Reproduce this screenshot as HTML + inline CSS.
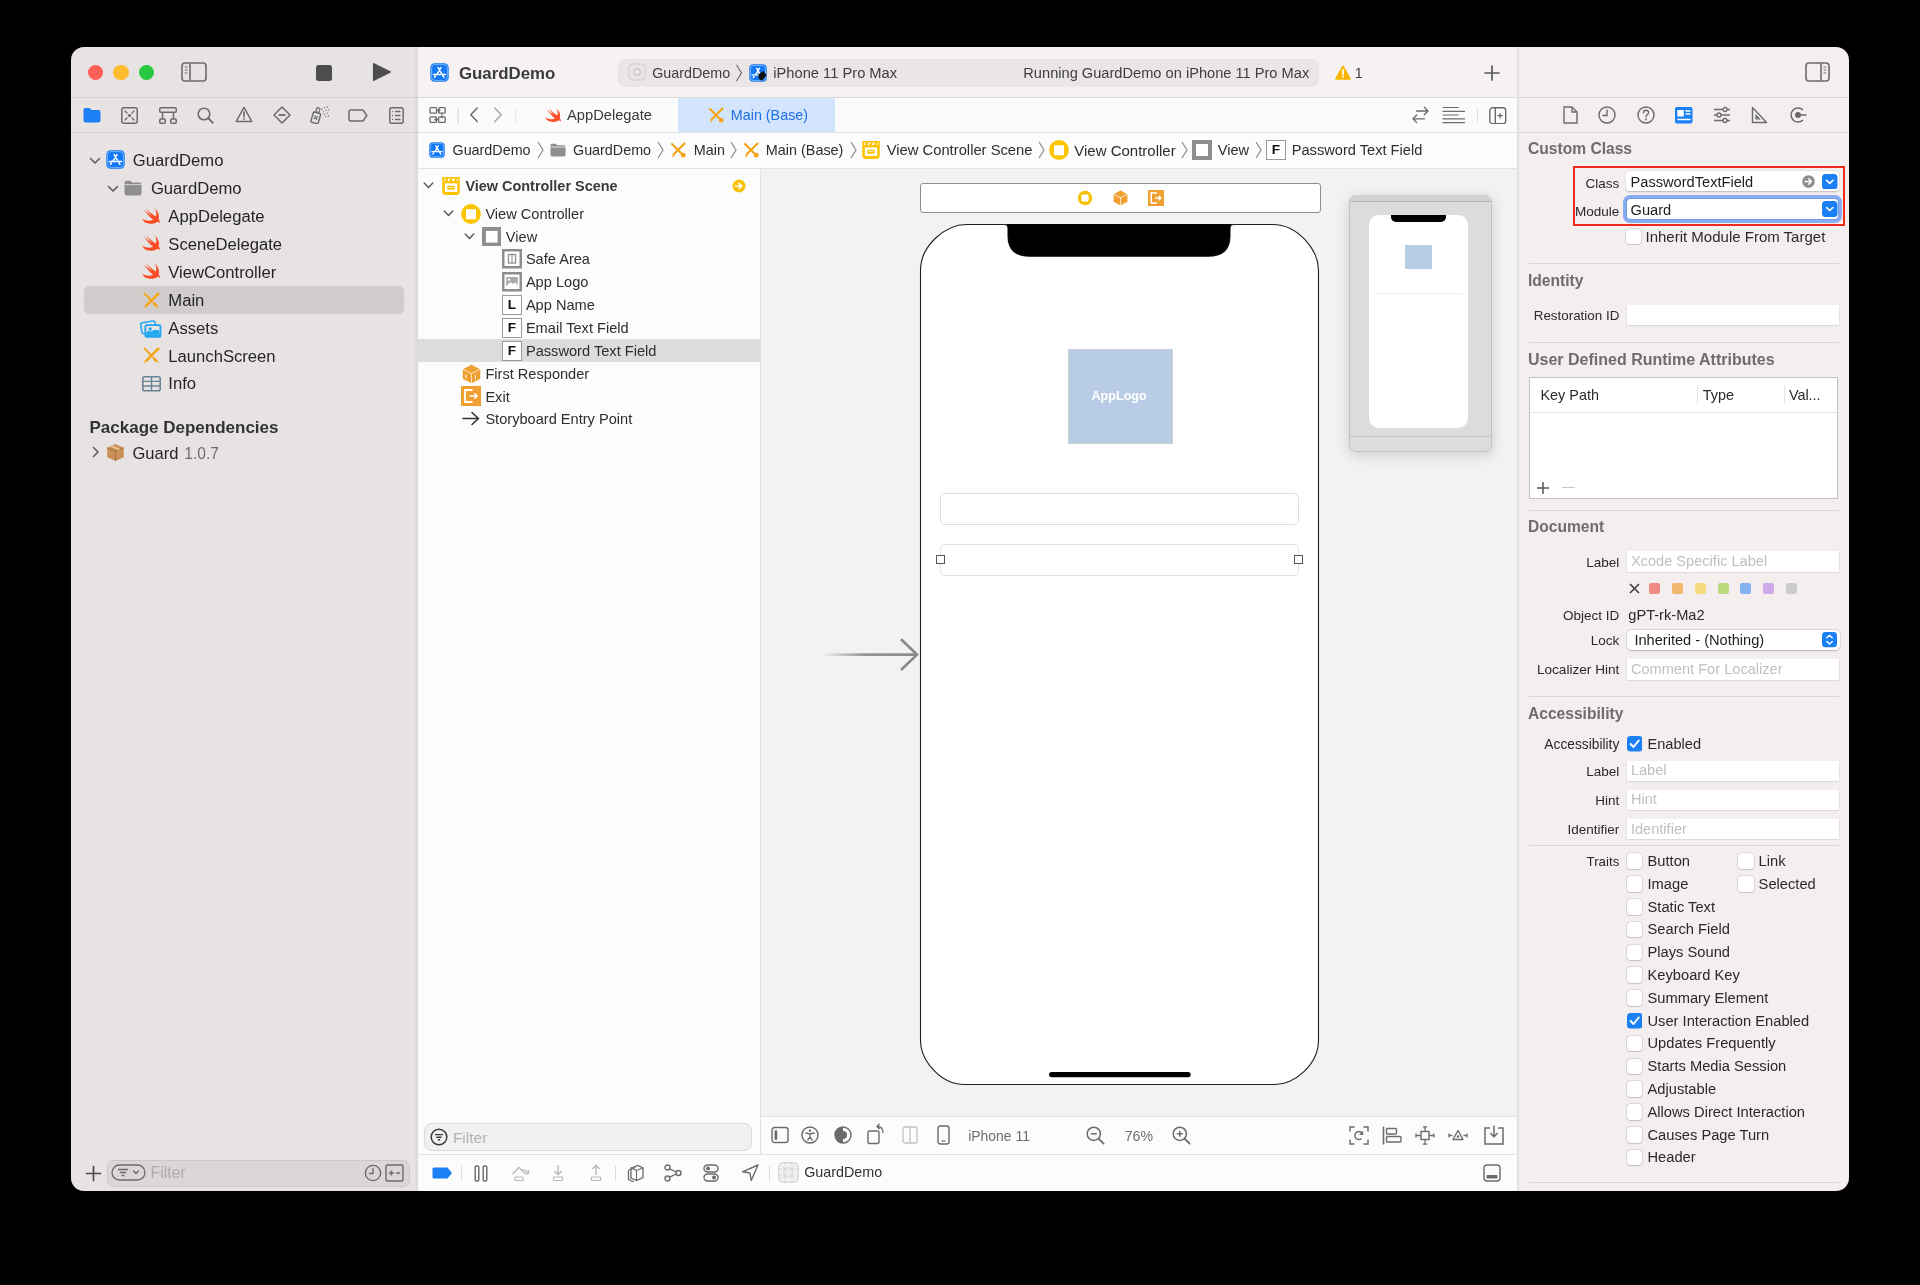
<!DOCTYPE html>
<html><head><meta charset="utf-8">
<style>
*{margin:0;padding:0;box-sizing:border-box}
html,body{width:1920px;height:1285px;background:#000;overflow:hidden}
body{font-family:"Liberation Sans",sans-serif;color:#262626;position:relative}
.a{position:absolute}
.t{position:absolute;white-space:nowrap;line-height:1}
#win{position:absolute;left:0;top:0;width:1920px;height:1285px;clip-path:inset(47px 71px 94px 71px round 13px);will-change:transform}
</style></head><body>
<div id="win">
<div class="a" style="left:71px;top:47px;width:347px;height:1144px;background:#e8e3e3;"></div>
<div class="a" style="left:418px;top:47px;width:1100px;height:50px;background:#f6f2f2;"></div>
<div class="a" style="left:1518px;top:47px;width:331px;height:1144px;background:#f4eeee;"></div>
<div class="a" style="left:418px;top:98px;width:1100px;height:34px;background:#fcfbfb;"></div>
<div class="a" style="left:418px;top:133px;width:1100px;height:35px;background:#fcfcfc;"></div>
<div class="a" style="left:418px;top:169px;width:342px;height:986px;background:#fcfcfc;"></div>
<div class="a" style="left:761px;top:169px;width:757px;height:948px;background:#f2f2f2;"></div>
<div class="a" style="left:761px;top:1117px;width:757px;height:37px;background:#fcfcfc;"></div>
<div class="a" style="left:418px;top:1155px;width:1100px;height:36px;background:#fcfcfc;"></div>
<div class="a" style="left:71px;top:97px;width:347px;height:1px;background:#d5d0d0;"></div>
<div class="a" style="left:71px;top:132px;width:347px;height:1px;background:#d5d0d0;"></div>
<div class="a" style="left:418px;top:97px;width:1100px;height:1px;background:#dcd8d8;"></div>
<div class="a" style="left:418px;top:132px;width:1100px;height:1px;background:#e3e3e3;"></div>
<div class="a" style="left:418px;top:168px;width:1100px;height:1px;background:#e3e3e3;"></div>
<div class="a" style="left:1518px;top:97px;width:331px;height:1px;background:#dcd7d7;"></div>
<div class="a" style="left:1518px;top:132px;width:331px;height:1px;background:#dcd7d7;"></div>
<div class="a" style="left:414px;top:47px;width:4px;height:1144px;background:linear-gradient(to right, rgba(0,0,0,0), rgba(60,40,40,.07));"></div>
<div class="a" style="left:1517px;top:47px;width:2px;height:1144px;background:#e4dfdf;"></div>
<div class="a" style="left:760px;top:169px;width:1px;height:985px;background:#e2e2e2;"></div>
<div class="a" style="left:761px;top:1116px;width:757px;height:1px;background:#e4e4e4;"></div>
<div class="a" style="left:418px;top:1154px;width:1100px;height:1px;background:#e4e4e4;"></div>
<div class="a" style="left:87.8px;top:64.8px;width:15.4px;height:15.4px;border-radius:50%;background:#fe5f57"></div>
<div class="a" style="left:113.3px;top:64.8px;width:15.4px;height:15.4px;border-radius:50%;background:#febc2e"></div>
<div class="a" style="left:138.8px;top:64.8px;width:15.4px;height:15.4px;border-radius:50%;background:#28c840"></div>
<svg class="a" style="left:181px;top:62px" width="26" height="20" viewBox="0 0 26 20" fill="none"><rect x="1" y="1" width="24" height="18" rx="3" stroke="#6b6b6b" stroke-width="1.6"/><path d="M9 1 V19" stroke="#6b6b6b" stroke-width="1.6"/><path d="M3.8 5 H6.5 M3.8 8 H6.5 M3.8 11 H6.5" stroke="#6b6b6b" stroke-width="1.2"/></svg>
<div class="a" style="left:315.5px;top:64.5px;width:16.5px;height:16px;background:#4d4d4d;border-radius:2.5px"></div>
<svg class="a" style="left:372px;top:62px" width="20" height="20" viewBox="0 0 20 20" fill="none"><path d="M1.5 1.5 L18.5 10 L1.5 18.5 Z" fill="#4d4d4d" stroke="#4d4d4d" stroke-width="1.2" stroke-linejoin="round"/></svg>
<svg class="a" style="left:83px;top:107px" width="18" height="16" viewBox="0 0 18 16" fill="none"><path d="M0.5 3 Q0.5 1 2.5 1 H6.5 L8.5 3 H15.5 Q17.5 3 17.5 5 V13.5 Q17.5 15.5 15.5 15.5 H2.5 Q0.5 15.5 0.5 13.5 Z" fill="#1b7ff6"/></svg>
<svg class="a" style="left:121px;top:107px" width="17" height="17" viewBox="0 0 17 17" fill="none"><rect x="0.8" y="0.8" width="15.4" height="15.4" rx="2" stroke="#6b6b6b" stroke-width="1.5"/><circle cx="8.5" cy="8.5" r="1.6" fill="#6b6b6b"/><path d="M4 4 L6 6 M13 4 L11 6 M4 13 L6 11 M13 13 L11 11" stroke="#6b6b6b" stroke-width="1.3" stroke-linecap="round"/></svg>
<svg class="a" style="left:159px;top:107px" width="18" height="17" viewBox="0 0 18 17" fill="none"><rect x="0.8" y="0.8" width="16.4" height="4.4" rx="1" stroke="#6b6b6b" stroke-width="1.5"/><path d="M3.5 5.2 V12 M14.5 5.2 V12" stroke="#6b6b6b" stroke-width="1.5"/><rect x="0.8" y="12" width="5.4" height="4.2" rx="1" stroke="#6b6b6b" stroke-width="1.5"/><rect x="11.8" y="12" width="5.4" height="4.2" rx="1" stroke="#6b6b6b" stroke-width="1.5"/></svg>
<svg class="a" style="left:197px;top:107px" width="17" height="17" viewBox="0 0 17 17" fill="none"><circle cx="7" cy="7" r="5.8" stroke="#6b6b6b" stroke-width="1.6"/><path d="M11.2 11.2 L15.8 15.8" stroke="#6b6b6b" stroke-width="1.8" stroke-linecap="round"/></svg>
<svg class="a" style="left:235px;top:106px" width="18" height="17" viewBox="0 0 18 17" fill="none"><path d="M9 1.3 L16.8 15.5 H1.2 Z" stroke="#6b6b6b" stroke-width="1.5" stroke-linejoin="round"/><path d="M9 6 V10.5" stroke="#6b6b6b" stroke-width="1.7" stroke-linecap="round"/><circle cx="9" cy="13" r="0.9" fill="#6b6b6b"/></svg>
<svg class="a" style="left:273px;top:106px" width="18" height="18" viewBox="0 0 18 18" fill="none"><path d="M9 1 L17 9 L9 17 L1 9 Z" stroke="#6b6b6b" stroke-width="1.5" stroke-linejoin="round"/><path d="M5.5 9 H12.5" stroke="#6b6b6b" stroke-width="1.8"/></svg>
<svg class="a" style="left:310px;top:106px" width="21" height="18" viewBox="0 0 21 18" fill="none"><g transform="rotate(16 6 11)"><rect x="2.2" y="6.6" width="7.6" height="10.6" rx="1.3" stroke="#6b6b6b" stroke-width="1.4"/><rect x="4.4" y="1.6" width="3.2" height="4.4" rx=".5" stroke="#6b6b6b" stroke-width="1.2"/><path d="M4.2 10 L7.8 13.6 M7.8 10 L4.2 13.6" stroke="#6b6b6b" stroke-width="1.1"/></g><g fill="#6b6b6b"><circle cx="12" cy="3.2" r=".65"/><circle cx="14.6" cy="1.6" r=".65"/><circle cx="17.2" cy="1" r=".65"/><circle cx="13.2" cy="5.8" r=".65"/><circle cx="16" cy="4.4" r=".65"/><circle cx="18.6" cy="3.8" r=".65"/><circle cx="14.4" cy="8.4" r=".65"/><circle cx="17.2" cy="7.2" r=".65"/><circle cx="15.6" cy="10.6" r=".65"/><circle cx="18.4" cy="10" r=".65"/></g></svg>
<svg class="a" style="left:348px;top:108.5px" width="20" height="13" viewBox="0 0 20 13" fill="none"><path d="M2.8 1 H15 L18.8 6.5 L15 12 H2.8 Q1 12 1 10 V3 Q1 1 2.8 1 Z" stroke="#6b6b6b" stroke-width="1.5" stroke-linejoin="round"/></svg>
<svg class="a" style="left:389px;top:106.5px" width="15" height="17" viewBox="0 0 15 17" fill="none"><rect x="0.8" y="0.8" width="13.4" height="15.4" rx="2" stroke="#6b6b6b" stroke-width="1.5"/><path d="M6 4.6 H11.5 M6 8.5 H11.5 M6 12.4 H11.5" stroke="#6b6b6b" stroke-width="1.5"/><g fill="#6b6b6b"><circle cx="3.6" cy="4.6" r=".7"/><circle cx="3.6" cy="8.5" r=".7"/><circle cx="3.6" cy="12.4" r=".7"/></g></svg>
<svg class="a" style="left:89px;top:155px" width="12" height="12" viewBox="0 0 12 12" fill="none"><path d="M1.5 3.5 L6 8 L10.5 3.5" stroke="#5e5e5e" stroke-width="1.6" fill="none" stroke-linecap="round" stroke-linejoin="round"/></svg>
<svg class="a" style="left:106px;top:150px" width="19" height="20" viewBox="0 0 19 20" fill="none"><svg width="19" height="19" viewBox="0 0 19 19"><rect x="0.3" y="0.3" width="18.4" height="18.4" rx="4.3" fill="#1278f6"/><rect x="1.6" y="1.6" width="15.8" height="15.8" rx="3.2" stroke="#fff" stroke-opacity=".6" stroke-width=".7" fill="none"/><path d="M8.1 4.6 L13.9 14.4 M11 4.6 L7 11.2 M3.4 11.5 H10.4 M12.4 11.5 H15.6 M5.3 13.1 L4.6 14.4" stroke="#fff" stroke-width="1.5" stroke-linecap="round" fill="none"/></svg></svg>
<div class="t" style="left:132.80px;top:153.00px;font-size:16.65px;color:#262626;font-weight:400;">GuardDemo</div>
<svg class="a" style="left:106.5px;top:183px" width="12" height="12" viewBox="0 0 12 12" fill="none"><path d="M1.5 3.5 L6 8 L10.5 3.5" stroke="#5e5e5e" stroke-width="1.6" fill="none" stroke-linecap="round" stroke-linejoin="round"/></svg>
<svg class="a" style="left:124px;top:180px" width="18" height="16" viewBox="0 0 18 16" fill="none"><path d="M0.5 2.5 Q0.5 0.8 2.2 0.8 H6.5 L8.2 2.5 H15.8 Q17.5 2.5 17.5 4.2 V13.8 Q17.5 15.5 15.8 15.5 H2.2 Q0.5 15.5 0.5 13.8 Z" fill="#8e8e8e"/><path d="M0.5 4.6 H17.5" stroke="#e7e2e2" stroke-width="0.8"/></svg>
<div class="t" style="left:150.90px;top:181.00px;font-size:16.65px;color:#262626;font-weight:400;">GuardDemo</div>
<div class="a" style="left:84px;top:286px;width:320px;height:28px;background:#d1cccc;border-radius:5px"></div>
<svg class="a" style="left:142px;top:207.5px" width="18" height="16" viewBox="0 0 18 16" fill="none"><svg viewBox="0.9 2.9 18.4 16" width="18" height="16" x="0" y="0"><path d="M13.543 3.005c4.096 2.765 5.543 7.695 4.32 11.407.044.043.087.087.131.131 1.61 1.984 1.163 4.131.957 3.727-.855-1.666-2.458-1.183-3.264-.834-3.007 1.716-7.2 1.898-11.457.126A11.92 11.92 0 0 1 .944 13.4c.66.504 1.415.964 2.24 1.34 3.347 1.56 6.706 1.469 9.083.002-3.38-2.592-6.223-5.958-8.36-8.696-.452-.458-.78-1.03-1.122-1.565 2.586 2.362 6.67 5.34 8.136 6.159-3.113-3.283-5.854-7.36-5.73-7.23 4.9 4.952 9.44 7.765 9.44 7.765.155.082.274.154.37.216.1-.247.183-.503.253-.77.786-2.836-.112-6.08-2.087-8.739z" fill="#fc4c24"/></svg></svg>
<div class="t" style="left:168.30px;top:209.00px;font-size:16.65px;color:#262626;font-weight:400;">AppDelegate</div>
<svg class="a" style="left:142px;top:235.2px" width="18" height="16" viewBox="0 0 18 16" fill="none"><svg viewBox="0.9 2.9 18.4 16" width="18" height="16" x="0" y="0"><path d="M13.543 3.005c4.096 2.765 5.543 7.695 4.32 11.407.044.043.087.087.131.131 1.61 1.984 1.163 4.131.957 3.727-.855-1.666-2.458-1.183-3.264-.834-3.007 1.716-7.2 1.898-11.457.126A11.92 11.92 0 0 1 .944 13.4c.66.504 1.415.964 2.24 1.34 3.347 1.56 6.706 1.469 9.083.002-3.38-2.592-6.223-5.958-8.36-8.696-.452-.458-.78-1.03-1.122-1.565 2.586 2.362 6.67 5.34 8.136 6.159-3.113-3.283-5.854-7.36-5.73-7.23 4.9 4.952 9.44 7.765 9.44 7.765.155.082.274.154.37.216.1-.247.183-.503.253-.77.786-2.836-.112-6.08-2.087-8.739z" fill="#fc4c24"/></svg></svg>
<div class="t" style="left:168.30px;top:237.00px;font-size:16.65px;color:#262626;font-weight:400;">SceneDelegate</div>
<svg class="a" style="left:142px;top:262.9px" width="18" height="16" viewBox="0 0 18 16" fill="none"><svg viewBox="0.9 2.9 18.4 16" width="18" height="16" x="0" y="0"><path d="M13.543 3.005c4.096 2.765 5.543 7.695 4.32 11.407.044.043.087.087.131.131 1.61 1.984 1.163 4.131.957 3.727-.855-1.666-2.458-1.183-3.264-.834-3.007 1.716-7.2 1.898-11.457.126A11.92 11.92 0 0 1 .944 13.4c.66.504 1.415.964 2.24 1.34 3.347 1.56 6.706 1.469 9.083.002-3.38-2.592-6.223-5.958-8.36-8.696-.452-.458-.78-1.03-1.122-1.565 2.586 2.362 6.67 5.34 8.136 6.159-3.113-3.283-5.854-7.36-5.73-7.23 4.9 4.952 9.44 7.765 9.44 7.765.155.082.274.154.37.216.1-.247.183-.503.253-.77.786-2.836-.112-6.08-2.087-8.739z" fill="#fc4c24"/></svg></svg>
<div class="t" style="left:168.30px;top:265.00px;font-size:16.65px;color:#262626;font-weight:400;">ViewController</div>
<svg class="a" style="left:142.5px;top:291.5px" width="17" height="17" viewBox="0 0 17 17" fill="none"><path d="M1.6 1.6 L9.2 9.2" stroke="#f2a516" stroke-width="2" stroke-linecap="round"/><path d="M9.4 9.6 Q11.5 10.2 12.8 11.6 Q14.6 13.6 16 15.4 Q13.2 15.6 11.4 14.3 Q9.6 12.8 9.4 9.6 Z" fill="#f2a516"/><path d="M14.6 2.4 L3.4 13.6" stroke="#f2a516" stroke-width="2.6" stroke-linecap="butt"/><circle cx="15" cy="2" r="1.6" fill="#f2a516"/><path d="M2.4 12.6 L1 16 L4.4 14.6 Z" fill="#f2a516"/></svg>
<div class="t" style="left:168.30px;top:293.00px;font-size:16.65px;color:#262626;font-weight:400;">Main</div>
<svg class="a" style="left:140px;top:319.3px" width="23" height="20" viewBox="0 0 23 20" fill="none"><rect x="1.2" y="2.8" width="14.5" height="11" rx="2" transform="rotate(-9 8.5 8.3)" stroke="#22a7f2" stroke-width="1.6" fill="#e8e3e3"/><rect x="4.4" y="5.2" width="17" height="13.6" rx="2.2" fill="#22a7f2"/><rect x="6.3" y="7.1" width="13.2" height="8.2" rx=".8" fill="#e8e3e3"/><circle cx="10.2" cy="10" r="1.7" fill="#22a7f2"/><path d="M6.3 13.2 Q9 11 11.5 12.6 Q14.5 9.6 19.5 11.8 V15.5 H6.3 Z" fill="#22a7f2"/></svg>
<div class="t" style="left:168.30px;top:321.00px;font-size:16.65px;color:#262626;font-weight:400;">Assets</div>
<svg class="a" style="left:142.5px;top:347.1px" width="17" height="17" viewBox="0 0 17 17" fill="none"><path d="M1.6 1.6 L9.2 9.2" stroke="#f2a516" stroke-width="2" stroke-linecap="round"/><path d="M9.4 9.6 Q11.5 10.2 12.8 11.6 Q14.6 13.6 16 15.4 Q13.2 15.6 11.4 14.3 Q9.6 12.8 9.4 9.6 Z" fill="#f2a516"/><path d="M14.6 2.4 L3.4 13.6" stroke="#f2a516" stroke-width="2.6" stroke-linecap="butt"/><circle cx="15" cy="2" r="1.6" fill="#f2a516"/><path d="M2.4 12.6 L1 16 L4.4 14.6 Z" fill="#f2a516"/></svg>
<div class="t" style="left:168.30px;top:349.00px;font-size:16.65px;color:#262626;font-weight:400;">LaunchScreen</div>
<svg class="a" style="left:141.5px;top:376.4px" width="19" height="15.5" viewBox="0 0 19 15.5" fill="none"><rect x="0.8" y="0.8" width="17.4" height="13.9" rx="1.8" stroke="#6a8494" stroke-width="1.6"/><path d="M0.8 5.4 H18.2 M0.8 10 H18.2 M9.5 0.8 V14.7" stroke="#6a8494" stroke-width="1.4"/></svg>
<div class="t" style="left:168.30px;top:376.00px;font-size:16.65px;color:#262626;font-weight:400;">Info</div>
<div class="t" style="left:89.50px;top:419.00px;font-size:17.0px;color:#333333;font-weight:700;">Package Dependencies</div>
<svg class="a" style="left:89.5px;top:446px" width="12" height="12" viewBox="0 0 12 12" fill="none"><path d="M3.5 1.5 L8 6 L3.5 10.5" stroke="#5e5e5e" stroke-width="1.6" fill="none" stroke-linecap="round" stroke-linejoin="round"/></svg>
<svg class="a" style="left:106px;top:443px" width="19" height="19" viewBox="0 0 19 19" fill="none"><path d="M9.5 1 L17.8 4.8 V14.2 L9.5 18 L1.2 14.2 V4.8 Z" fill="#c9925a"/><path d="M1.2 4.8 L9.5 8.6 L17.8 4.8 M9.5 8.6 V18" stroke="#a26d38" stroke-width="1"/><path d="M5.2 2.9 L13.5 6.7" stroke="#e8c79c" stroke-width="1.6"/></svg>
<div class="t" style="left:132.50px;top:446.00px;font-size:16.55px;color:#262626;font-weight:400;">Guard</div>
<div class="t" style="left:184.30px;top:446.00px;font-size:15.6px;color:#6c6c6c;font-weight:400;">1.0.7</div>
<svg class="a" style="left:85px;top:1165px" width="17" height="17" viewBox="0 0 17 17" fill="none"><path d="M8.5 1.5 V15.5 M1.5 8.5 H15.5" stroke="#4a4a4a" stroke-width="1.7" stroke-linecap="round"/></svg>
<div class="a" style="left:107px;top:1159.5px;width:303px;height:27px;background:#dcd7d7;border-radius:7px;border:1px solid #cdc8c8"></div>
<svg class="a" style="left:111px;top:1164px" width="36" height="17" viewBox="0 0 36 17" fill="none"><rect x="1" y="1" width="33" height="15" rx="7.5" stroke="#6b6b6b" stroke-width="1.3"/><path d="M7 5.5 H17 M8.8 8.5 H15.2 M10.6 11.5 H13.4" stroke="#6b6b6b" stroke-width="1.3"/><path d="M22.5 7 L25 9.5 L27.5 7" stroke="#6b6b6b" stroke-width="1.4" stroke-linecap="round" stroke-linejoin="round"/></svg>
<div class="t" style="left:150.50px;top:1165.00px;font-size:15.8px;color:#b0abab;font-weight:400;">Filter</div>
<svg class="a" style="left:364px;top:1164px" width="18" height="18" viewBox="0 0 18 18" fill="none"><circle cx="9" cy="9" r="7.6" stroke="#6b6b6b" stroke-width="1.4"/><path d="M9 4.5 V9.5 H5.5" stroke="#6b6b6b" stroke-width="1.4" stroke-linecap="round"/></svg>
<svg class="a" style="left:385px;top:1164px" width="19" height="18" viewBox="0 0 19 18" fill="none"><rect x="1" y="1" width="17" height="16" rx="1.5" stroke="#6b6b6b" stroke-width="1.4"/><path d="M3.8 9 H9 M6.4 6.4 V11.6 M11 9 H15.2" stroke="#6b6b6b" stroke-width="1.5"/></svg>
<svg class="a" style="left:430px;top:63px" width="19" height="19" viewBox="0 0 19 19" fill="none"><svg width="19" height="19" viewBox="0 0 19 19"><rect x="0.3" y="0.3" width="18.4" height="18.4" rx="4.3" fill="#1278f6"/><rect x="1.6" y="1.6" width="15.8" height="15.8" rx="3.2" stroke="#fff" stroke-opacity=".6" stroke-width=".7" fill="none"/><path d="M8.1 4.6 L13.9 14.4 M11 4.6 L7 11.2 M3.4 11.5 H10.4 M12.4 11.5 H15.6 M5.3 13.1 L4.6 14.4" stroke="#fff" stroke-width="1.5" stroke-linecap="round" fill="none"/></svg></svg>
<div class="t" style="left:458.90px;top:66.00px;font-size:16.86px;color:#3b3b3b;font-weight:700;">GuardDemo</div>
<div class="a" style="left:618px;top:58.5px;width:701px;height:28px;background:#ebe6e6;border-radius:7px"></div>
<svg class="a" style="left:628px;top:63px" width="18" height="18" viewBox="0 0 18 18" fill="none"><rect x="1" y="1" width="16" height="16" rx="4" stroke="#c9c4c4" stroke-width="1.3" stroke-dasharray="1.5 1.2"/><circle cx="9" cy="9" r="3.3" stroke="#c9c4c4" stroke-width="1.3"/></svg>
<div class="t" style="left:652.20px;top:66.00px;font-size:14.34px;color:#3e3e3e;font-weight:400;">GuardDemo</div>
<svg class="a" style="left:735px;top:64px" width="8" height="18" viewBox="0 0 8 18" fill="none"><path d="M1.5 1 L6.5 9 L1.5 17" stroke="#6b6b6b" stroke-width="1.2" fill="none"/></svg>
<svg class="a" style="left:749px;top:64px" width="18" height="18" viewBox="0 0 18 18" fill="none"><svg width="18" height="18" viewBox="0 0 19 19"><rect x="0.3" y="0.3" width="18.4" height="18.4" rx="4.3" fill="#1278f6"/><rect x="1.6" y="1.6" width="15.8" height="15.8" rx="3.2" stroke="#fff" stroke-opacity=".6" stroke-width=".7" fill="none"/><path d="M8.1 4.6 L13.9 14.4 M11 4.6 L7 11.2 M3.4 11.5 H10.4 M12.4 11.5 H15.6 M5.3 13.1 L4.6 14.4" stroke="#fff" stroke-width="1.5" stroke-linecap="round" fill="none"/></svg><path d="M9 11 L14 7 L17.5 11 L12 16 Z" fill="#111"/><rect x="11" y="9" width="5" height="7" rx="1" transform="rotate(40 13 12)" fill="#111"/></svg>
<div class="t" style="left:773.30px;top:66.00px;font-size:14.7px;color:#3e3e3e;font-weight:400;">iPhone 11 Pro Max</div>
<div class="t" style="left:1023.30px;top:66.00px;font-size:14.63px;color:#3e3e3e;font-weight:400;">Running GuardDemo on iPhone 11 Pro Max</div>
<svg class="a" style="left:1335px;top:65px" width="16" height="15" viewBox="0 0 16 15" fill="none"><path d="M8 1.2 L15.2 14 H0.8 Z" fill="#f7b500" stroke="#f7b500" stroke-width="1.4" stroke-linejoin="round"/><path d="M8 5 V9.3" stroke="#fff" stroke-width="1.8" stroke-linecap="round"/><circle cx="8" cy="11.8" r="1" fill="#fff"/></svg>
<div class="t" style="left:1354.80px;top:66.00px;font-size:14.3px;color:#3e3e3e;font-weight:400;">1</div>
<svg class="a" style="left:1484px;top:65px" width="16" height="16" viewBox="0 0 16 16" fill="none"><path d="M8 1 V15 M1 8 H15" stroke="#5a5a5a" stroke-width="1.7" stroke-linecap="round"/></svg>
<svg class="a" style="left:1805px;top:62px" width="25" height="20" viewBox="0 0 25 20" fill="none"><rect x="1" y="1" width="23" height="18" rx="3" stroke="#6b6b6b" stroke-width="1.6"/><path d="M16 1 V19" stroke="#6b6b6b" stroke-width="1.6"/><path d="M18.5 5 H21.2 M18.5 8 H21.2 M18.5 11 H21.2" stroke="#6b6b6b" stroke-width="1.2"/></svg>
<svg class="a" style="left:429px;top:106px" width="18" height="18" viewBox="0 0 18 18" fill="none"><rect x="1" y="1.6" width="6.6" height="5.6" rx="1" stroke="#6b6b6b" stroke-width="1.3"/><rect x="9.6" y="1.6" width="6.6" height="5.6" rx="1" stroke="#6b6b6b" stroke-width="1.3"/><rect x="1" y="10.9" width="6.6" height="5.5" rx="1" stroke="#6b6b6b" stroke-width="1.3"/><rect x="9.6" y="10.9" width="6.6" height="5.5" rx="1" stroke="#6b6b6b" stroke-width="1.3"/><path d="M7.6 4.4 H11.2 M10 3.2 L11.3 4.4 L10 5.6 M12.9 7.2 V12 M11.7 10.8 L12.9 12.1 L14.1 10.8 M9.6 13.6 H5.8 M7 12.4 L5.7 13.6 L7 14.8" stroke="#6b6b6b" stroke-width="1" fill="none"/></svg>
<div class="a" style="left:457px;top:107.5px;width:1.5px;height:15px;background:#e6e6e6;"></div>
<svg class="a" style="left:469px;top:107px" width="10" height="16" viewBox="0 0 10 16" fill="none"><path d="M8.2 1 L1.8 7.8 L8.2 14.6" stroke="#6b6b6b" stroke-width="1.5" fill="none" stroke-linecap="round" stroke-linejoin="round"/></svg>
<svg class="a" style="left:493px;top:107px" width="10" height="16" viewBox="0 0 10 16" fill="none"><path d="M1.8 1 L8.2 7.8 L1.8 14.6" stroke="#a6a6a6" stroke-width="1.5" fill="none" stroke-linecap="round" stroke-linejoin="round"/></svg>
<div class="a" style="left:514.5px;top:107.5px;width:1.5px;height:15px;background:#e6e6e6;"></div>
<svg class="a" style="left:545px;top:108px" width="16" height="14" viewBox="0 0 16 14" fill="none"><svg viewBox="0.9 2.9 18.4 16" width="16" height="14"><path d="M13.543 3.005c4.096 2.765 5.543 7.695 4.32 11.407.044.043.087.087.131.131 1.61 1.984 1.163 4.131.957 3.727-.855-1.666-2.458-1.183-3.264-.834-3.007 1.716-7.2 1.898-11.457.126A11.92 11.92 0 0 1 .944 13.4c.66.504 1.415.964 2.24 1.34 3.347 1.56 6.706 1.469 9.083.002-3.38-2.592-6.223-5.958-8.36-8.696-.452-.458-.78-1.03-1.122-1.565 2.586 2.362 6.67 5.34 8.136 6.159-3.113-3.283-5.854-7.36-5.73-7.23 4.9 4.952 9.44 7.765 9.44 7.765.155.082.274.154.37.216.1-.247.183-.503.253-.77.786-2.836-.112-6.08-2.087-8.739z" fill="#fc4c24"/></svg></svg>
<div class="t" style="left:567.00px;top:108.00px;font-size:14.7px;color:#3a3a3a;font-weight:400;">AppDelegate</div>
<div class="a" style="left:678px;top:98px;width:157px;height:34px;background:#d3e5fc;"></div>
<svg class="a" style="left:708px;top:107px" width="16" height="16" viewBox="0 0 16 16" fill="none"><path d="M2 2 L14 14" stroke="#f4a41a" stroke-width="2.1" stroke-linecap="round"/><path d="M14.5 1.5 L3.5 12.5" stroke="#f4a41a" stroke-width="2.1" stroke-linecap="round"/><path d="M3.5 12.5 L1.8 15.2 L4.6 14.2 Z" fill="#f4a41a"/><circle cx="13.2" cy="13.2" r="2.4" fill="#f4a41a"/></svg>
<div class="t" style="left:730.80px;top:108.00px;font-size:14.33px;color:#1f6fe5;font-weight:400;">Main (Base)</div>
<svg class="a" style="left:1411px;top:106px" width="19" height="18" viewBox="0 0 19 18" fill="none"><path d="M5.5 5 H17 M13.3 1.2 L17 5 L13.3 8.8" stroke="#6b6b6b" stroke-width="1.3" fill="none" stroke-linecap="round" stroke-linejoin="round"/><path d="M13.5 12.8 H2 M5.7 9 L2 12.8 L5.7 16.6" stroke="#6b6b6b" stroke-width="1.3" fill="none" stroke-linecap="round" stroke-linejoin="round"/></svg>
<svg class="a" style="left:1441px;top:106px" width="25" height="18" viewBox="0 0 25 18" fill="none"><path d="M1.5 1.5 H17.8 M1.5 5.3 H24 M1.5 9 H17.8 M1.5 12.8 H24 M1.5 16.6 H24" stroke="#6e6e6e" stroke-width="1.15"/></svg>
<div class="a" style="left:1477px;top:108px;width:1px;height:14px;background:#dedede;"></div>
<svg class="a" style="left:1489px;top:106.5px" width="17.5" height="17.5" viewBox="0 0 17.5 17.5" fill="none"><rect x=".8" y=".8" width="15.9" height="15.9" rx="2.8" stroke="#6b6b6b" stroke-width="1.4"/><path d="M6.3 .8 V16.7" stroke="#6b6b6b" stroke-width="1.4"/><path d="M8.3 8.7 H13.9 M11.1 5.9 V11.5" stroke="#6b6b6b" stroke-width="1.3"/></svg>
<svg class="a" style="left:429px;top:142px" width="16" height="16" viewBox="0 0 16 16" fill="none"><svg width="16" height="16" viewBox="0 0 19 19"><rect x="0.3" y="0.3" width="18.4" height="18.4" rx="4.3" fill="#1278f6"/><rect x="1.6" y="1.6" width="15.8" height="15.8" rx="3.2" stroke="#fff" stroke-opacity=".6" stroke-width=".7" fill="none"/><path d="M8.1 4.6 L13.9 14.4 M11 4.6 L7 11.2 M3.4 11.5 H10.4 M12.4 11.5 H15.6 M5.3 13.1 L4.6 14.4" stroke="#fff" stroke-width="1.5" stroke-linecap="round" fill="none"/></svg></svg>
<div class="t" style="left:452.50px;top:143.00px;font-size:14.34px;color:#2e2e2e;font-weight:400;">GuardDemo</div>
<svg class="a" style="left:536.5px;top:141px" width="7" height="18" viewBox="0 0 7 18" fill="none"><path d="M1 1 L6 9 L1 17" stroke="#8a8a8a" stroke-width="1.2" fill="none"/></svg>
<svg class="a" style="left:549.5px;top:143px" width="16" height="14" viewBox="0 0 16 14" fill="none"><path d="M0.5 2.3 Q0.5 0.8 2 0.8 H5.8 L7.3 2.3 H14 Q15.5 2.3 15.5 3.8 V12 Q15.5 13.5 14 13.5 H2 Q0.5 13.5 0.5 12 Z" fill="#8e8e8e"/><path d="M0.5 4 H15.5" stroke="#fbfafa" stroke-width=".8"/></svg>
<div class="t" style="left:573.00px;top:143.00px;font-size:14.34px;color:#2e2e2e;font-weight:400;">GuardDemo</div>
<svg class="a" style="left:657px;top:141px" width="7" height="18" viewBox="0 0 7 18" fill="none"><path d="M1 1 L6 9 L1 17" stroke="#8a8a8a" stroke-width="1.2" fill="none"/></svg>
<svg class="a" style="left:670px;top:142px" width="16" height="16" viewBox="0 0 16 16" fill="none"><path d="M2 2 L14 14" stroke="#f4a41a" stroke-width="2.1" stroke-linecap="round"/><path d="M14.5 1.5 L3.5 12.5" stroke="#f4a41a" stroke-width="2.1" stroke-linecap="round"/><path d="M3.5 12.5 L1.8 15.2 L4.6 14.2 Z" fill="#f4a41a"/><circle cx="13.2" cy="13.2" r="2.4" fill="#f4a41a"/></svg>
<div class="t" style="left:693.80px;top:143.00px;font-size:14.4px;color:#2e2e2e;font-weight:400;">Main</div>
<svg class="a" style="left:729.5px;top:141px" width="7" height="18" viewBox="0 0 7 18" fill="none"><path d="M1 1 L6 9 L1 17" stroke="#8a8a8a" stroke-width="1.2" fill="none"/></svg>
<svg class="a" style="left:742.5px;top:142px" width="16" height="16" viewBox="0 0 16 16" fill="none"><path d="M2 2 L14 14" stroke="#f4a41a" stroke-width="2.1" stroke-linecap="round"/><path d="M14.5 1.5 L3.5 12.5" stroke="#f4a41a" stroke-width="2.1" stroke-linecap="round"/><path d="M3.5 12.5 L1.8 15.2 L4.6 14.2 Z" fill="#f4a41a"/><circle cx="13.2" cy="13.2" r="2.4" fill="#f4a41a"/></svg>
<div class="t" style="left:765.80px;top:143.00px;font-size:14.4px;color:#2e2e2e;font-weight:400;">Main (Base)</div>
<svg class="a" style="left:849.5px;top:141px" width="7" height="18" viewBox="0 0 7 18" fill="none"><path d="M1 1 L6 9 L1 17" stroke="#8a8a8a" stroke-width="1.2" fill="none"/></svg>
<svg class="a" style="left:862px;top:141px" width="18" height="18" viewBox="0 0 18 18.5" fill="none"><path d="M0 0 H18 V15 Q18 18.5 14.5 18.5 H3.5 Q0 18.5 0 15 Z" fill="#fdc300"/><path d="M1.6 4.2 L2.8 1.6 H4 L2.8 4.2 Z M5.2 4.2 L6.6 1.6 H8.6 L7.2 4.2 Z M9.8 4.2 L11.2 1.6 H13.2 L11.8 4.2 Z M14.4 4.2 L15.8 1.6 H16.6 L15.6 4.2 Z" fill="#fff"/><rect x="2.7" y="6.6" width="12.6" height="8.7" fill="#fff"/><rect x="5.1" y="8.9" width="7.7" height="4.1" rx=".8" fill="#fdc300"/><rect x="6.3" y="10.5" width="5.3" height=".9" rx=".4" fill="#fff"/></svg>
<div class="t" style="left:886.70px;top:143.00px;font-size:14.78px;color:#2e2e2e;font-weight:400;">View Controller Scene</div>
<svg class="a" style="left:1038px;top:141px" width="7" height="18" viewBox="0 0 7 18" fill="none"><path d="M1 1 L6 9 L1 17" stroke="#8a8a8a" stroke-width="1.2" fill="none"/></svg>
<svg class="a" style="left:1049.3px;top:140px" width="20" height="20" viewBox="0 0 20 20" fill="none"><circle cx="10" cy="10" r="9.9" fill="#fdc500"/><rect x="5" y="5.2" width="10" height="10" rx=".6" fill="#fff"/></svg>
<div class="t" style="left:1074.30px;top:143.00px;font-size:14.99px;color:#2e2e2e;font-weight:400;">View Controller</div>
<svg class="a" style="left:1181px;top:141px" width="7" height="18" viewBox="0 0 7 18" fill="none"><path d="M1 1 L6 9 L1 17" stroke="#8a8a8a" stroke-width="1.2" fill="none"/></svg>
<svg class="a" style="left:1192.3px;top:140px" width="20" height="20" viewBox="0 0 20 20" fill="none"><rect x="0" y="0" width="20" height="20" fill="#8e8e8e"/><rect x="4" y="4" width="12" height="12" fill="#fff"/></svg>
<div class="t" style="left:1217.70px;top:143.00px;font-size:14.6px;color:#2e2e2e;font-weight:400;">View</div>
<svg class="a" style="left:1255px;top:141px" width="7" height="18" viewBox="0 0 7 18" fill="none"><path d="M1 1 L6 9 L1 17" stroke="#8a8a8a" stroke-width="1.2" fill="none"/></svg>
<div class="a" style="left:1266px;top:140px;width:20px;height:20px;border:1px solid #9a9a9a;background:#fff;font:700 13.6px/18px 'Liberation Sans',sans-serif;color:#111;text-align:center">F</div>
<div class="t" style="left:1291.70px;top:143.00px;font-size:14.64px;color:#2e2e2e;font-weight:400;">Password Text Field</div>
<div class="a" style="left:418px;top:339px;width:342px;height:23px;background:#dcdcdc;"></div>
<svg class="a" style="left:423px;top:180px" width="11" height="11" viewBox="0 0 11 11" fill="none"><path d="M1.2 3 L5.5 7.5 L9.8 3" stroke="#5e5e5e" stroke-width="1.5" fill="none" stroke-linecap="round" stroke-linejoin="round"/></svg>
<svg class="a" style="left:442px;top:177px" width="18" height="18" viewBox="0 0 18 18.5" fill="none"><path d="M0 0 H18 V15 Q18 18.5 14.5 18.5 H3.5 Q0 18.5 0 15 Z" fill="#fdc300"/><path d="M1.6 4.2 L2.8 1.6 H4 L2.8 4.2 Z M5.2 4.2 L6.6 1.6 H8.6 L7.2 4.2 Z M9.8 4.2 L11.2 1.6 H13.2 L11.8 4.2 Z M14.4 4.2 L15.8 1.6 H16.6 L15.6 4.2 Z" fill="#fff"/><rect x="2.7" y="6.6" width="12.6" height="8.7" fill="#fff"/><rect x="5.1" y="8.9" width="7.7" height="4.1" rx=".8" fill="#fdc300"/><rect x="6.3" y="10.5" width="5.3" height=".9" rx=".4" fill="#fff"/></svg>
<div class="t" style="left:465.40px;top:179.00px;font-size:14.45px;color:#3a3a3a;font-weight:700;">View Controller Scene</div>
<svg class="a" style="left:732px;top:179px" width="14" height="14" viewBox="0 0 14 14" fill="none"><circle cx="7" cy="7" r="6.5" fill="#f7c100"/><path d="M3.5 7 H9.5 M7 4.3 L9.8 7 L7 9.7" stroke="#fff" stroke-width="1.7" fill="none" stroke-linecap="round" stroke-linejoin="round"/></svg>
<svg class="a" style="left:443px;top:208px" width="11" height="11" viewBox="0 0 11 11" fill="none"><path d="M1.2 3 L5.5 7.5 L9.8 3" stroke="#5e5e5e" stroke-width="1.5" fill="none" stroke-linecap="round" stroke-linejoin="round"/></svg>
<svg class="a" style="left:461px;top:203.5px" width="20" height="20" viewBox="0 0 20 20" fill="none"><circle cx="10" cy="10" r="9.9" fill="#fdc500"/><rect x="5" y="5.2" width="10" height="10" rx=".6" fill="#fff"/></svg>
<div class="t" style="left:485.40px;top:207.00px;font-size:14.6px;color:#2e2e2e;font-weight:400;">View Controller</div>
<svg class="a" style="left:463.5px;top:231px" width="11" height="11" viewBox="0 0 11 11" fill="none"><path d="M1.2 3 L5.5 7.5 L9.8 3" stroke="#5e5e5e" stroke-width="1.5" fill="none" stroke-linecap="round" stroke-linejoin="round"/></svg>
<svg class="a" style="left:481.5px;top:226.5px" width="19.5" height="19.5" viewBox="0 0 20 20" fill="none"><rect x="0" y="0" width="20" height="20" fill="#8e8e8e"/><rect x="4" y="4" width="12" height="12" fill="#fff"/></svg>
<div class="t" style="left:505.80px;top:230.00px;font-size:14.6px;color:#2e2e2e;font-weight:400;">View</div>
<svg class="a" style="left:501.8px;top:249.4px" width="20" height="19.5" viewBox="0 0 20 19.5" fill="none"><rect x="0" y="0" width="20" height="19.5" fill="#8e8e8e"/><rect x="2.5" y="2.5" width="15" height="14.5" fill="#fff"/><rect x="6.5" y="5.5" width="7" height="8.5" stroke="#8e8e8e" stroke-width="1.3"/><path d="M10 5.5 V14" stroke="#8e8e8e" stroke-width="1.1"/></svg>
<div class="t" style="left:525.90px;top:252.00px;font-size:14.6px;color:#2e2e2e;font-weight:400;">Safe Area</div>
<svg class="a" style="left:501.8px;top:272.3px" width="20" height="19.5" viewBox="0 0 20 19.5" fill="none"><rect x="0" y="0" width="20" height="19.5" fill="#8e8e8e"/><rect x="2.5" y="2.5" width="15" height="14.5" fill="#fff"/><rect x="4.2" y="5" width="11.6" height="9" fill="#a9a9a9"/><circle cx="7" cy="7.6" r="1.2" fill="#fff"/><path d="M4.2 14 L8.5 10 L11 12 L13 10.5 L15.8 13 V14 Z" fill="#fff"/></svg>
<div class="t" style="left:525.90px;top:275.00px;font-size:14.6px;color:#2e2e2e;font-weight:400;">App Logo</div>
<div class="a" style="left:501.8px;top:295.3px;width:20px;height:20px;border:1px solid #9a9a9a;background:#fff;font:700 13.6px/18px 'Liberation Sans',sans-serif;color:#111;text-align:center">L</div>
<div class="t" style="left:525.90px;top:298.00px;font-size:14.6px;color:#2e2e2e;font-weight:400;">App Name</div>
<div class="a" style="left:501.8px;top:318.2px;width:20px;height:20px;border:1px solid #9a9a9a;background:#fff;font:700 13.6px/18px 'Liberation Sans',sans-serif;color:#111;text-align:center">F</div>
<div class="t" style="left:525.90px;top:321.00px;font-size:14.6px;color:#2e2e2e;font-weight:400;">Email Text Field</div>
<div class="a" style="left:501.8px;top:341.1px;width:20px;height:20px;border:1px solid #9a9a9a;background:#fff;font:700 13.6px/18px 'Liberation Sans',sans-serif;color:#111;text-align:center">F</div>
<div class="t" style="left:525.90px;top:344.00px;font-size:14.64px;color:#2e2e2e;font-weight:400;">Password Text Field</div>
<svg class="a" style="left:461.5px;top:363.5px" width="19" height="20" viewBox="0 0 19 20" fill="none"><path d="M9.5 0.8 L18.2 5.2 V14.8 L9.5 19.2 L0.8 14.8 V5.2 Z" fill="#f0a030"/><path d="M0.8 5.2 L9.5 9.6 L18.2 5.2 M9.5 9.6 V19.2" stroke="#fff" stroke-width=".9" stroke-opacity=".8"/><path d="M4 10.5 V14 M13.5 11.5 V15" stroke="#fff" stroke-width="1.1"/></svg>
<div class="t" style="left:485.40px;top:367.00px;font-size:14.6px;color:#2e2e2e;font-weight:400;">First Responder</div>
<svg class="a" style="left:461px;top:386.3px" width="20" height="20" viewBox="0 0 20 20" fill="none"><rect x="0" y="0" width="20" height="20" fill="#f0a030"/><path d="M11.5 4 H4 V16 H11.5" stroke="#fff" stroke-width="1.8" fill="none"/><path d="M8.5 10 H16 M13.3 7.3 L16 10 L13.3 12.7" stroke="#fff" stroke-width="1.5" fill="none"/></svg>
<div class="t" style="left:485.40px;top:390.00px;font-size:14.6px;color:#2e2e2e;font-weight:400;">Exit</div>
<svg class="a" style="left:462px;top:411px" width="18" height="15" viewBox="0 0 18 15" fill="none"><path d="M1 7.5 H16.5 M10 1.5 L16.5 7.5 L10 13.5" stroke="#333" stroke-width="1.6" fill="none" stroke-linecap="round" stroke-linejoin="round"/></svg>
<div class="t" style="left:485.40px;top:412.00px;font-size:14.6px;color:#2e2e2e;font-weight:400;">Storyboard Entry Point</div>
<div class="a" style="left:919.5px;top:182.5px;width:401px;height:30.5px;border:1.5px solid #8c8c8c;border-radius:3px;background:#fff"></div>
<svg class="a" style="left:1076.5px;top:189.5px" width="16" height="16" viewBox="0 0 16 16" fill="none"><circle cx="8" cy="8" r="7.2" fill="#f7c100"/><rect x="4.4" y="4.4" width="7.2" height="7.2" rx="1" fill="#fff"/></svg>
<svg class="a" style="left:1112.5px;top:189.5px" width="15" height="16" viewBox="0 0 15 16" fill="none"><path d="M7.5 0.6 L14.4 4.2 V11.8 L7.5 15.4 L0.6 11.8 V4.2 Z" fill="#f0a030"/><path d="M0.6 4.2 L7.5 7.8 L14.4 4.2 M7.5 7.8 V15.4" stroke="#fff" stroke-width=".8"/></svg>
<svg class="a" style="left:1148px;top:189.5px" width="16" height="16" viewBox="0 0 16 16" fill="none"><rect x="0" y="0" width="16" height="16" fill="#f0a030"/><path d="M9 3 H3.2 V13 H9" stroke="#fff" stroke-width="1.5" fill="none"/><path d="M7 8 H13 M10.8 5.8 L13 8 L10.8 10.2" stroke="#fff" stroke-width="1.3" fill="none"/></svg>
<svg class="a" style="left:919px;top:222px" width="402" height="866" viewBox="0 0 402 866" fill="none"><path d="M47.5 2.5 H85 Q89 2.5 89 6.5 V14 C89 28 97 34.3 111 34.3 H289 C303 34.3 311 28 311 14 V6.5 Q311 2.5 315 2.5 H353.5 C378.80 2.5 399.5 27.80 399.5 48.5 V818.5 C399.5 842.70 375.30 862.5 355.5 862.5 H45.5 C21.30 862.5 1.5 838.30 1.5 818.5 V48.5 C1.5 23.20 26.80 2.5 47.5 2.5 Z" fill="#fff" stroke="#1e1e1e" stroke-width="1.1"/><path d="M85 2 Q89 2 89 6 V14 C89 28 97 34.3 111 34.3 H289 C303 34.3 311 28 311 14 V6 Q311 2 315 2 Z" fill="#000"/><rect x="130" y="849.9" width="141.7" height="5.4" rx="2.7" fill="#000"/></svg>
<div class="a" style="left:1068px;top:349px;width:104.5px;height:95px;background:#b8cde5;border:1px solid #cfcfd6"></div>
<div class="t" style="left:1091.50px;top:390.00px;font-size:12.6px;color:#ffffff;font-weight:700;">AppLogo</div>
<div class="a" style="left:940px;top:492.5px;width:359px;height:32.5px;border:1px solid #dedede;border-radius:5px;background:#fff"></div>
<div class="a" style="left:940px;top:543.5px;width:359px;height:32.5px;border:1px solid #e2e2e2;border-radius:5px;background:#fff"></div>
<div class="a" style="left:935.5px;top:554.5px;width:9.5px;height:9.5px;border:1.5px solid #555;background:#fff"></div>
<div class="a" style="left:1293.5px;top:554.5px;width:9.5px;height:9.5px;border:1.5px solid #555;background:#fff"></div>
<svg class="a" style="left:822px;top:637px" width="98" height="36" viewBox="0 0 98 36" fill="none"><defs><linearGradient id="ea" gradientUnits="userSpaceOnUse" x1="0" y1="0" x2="96" y2="0"><stop offset="0" stop-color="#8a8a8a" stop-opacity="0"/><stop offset=".45" stop-color="#8a8a8a" stop-opacity=".9"/><stop offset="1" stop-color="#8a8a8a"/></linearGradient></defs><path d="M1 17.6 H94" stroke="url(#ea)" stroke-width="2.7"/><path d="M79 2.2 L95 17.6 L79 33" stroke="#888" stroke-width="2.6" fill="none"/></svg>
<div class="a" style="left:1349px;top:194.5px;width:142.5px;height:257.5px;border-radius:7px;background:#dcdcdc;border:1px solid #c2c2c2;box-shadow:0 3px 14px rgba(0,0,0,.16)"></div>
<div class="a" style="left:1349.5px;top:194.5px;width:141.5px;height:6.5px;background:#d2d2d2;border-radius:7px 7px 0 0"></div>
<div class="a" style="left:1350px;top:200.5px;width:140.5px;height:1.5px;background:#b5b5b5;"></div>
<div class="a" style="left:1350px;top:435.5px;width:140.5px;height:1.2px;background:#c4c4c4;"></div>
<div class="a" style="left:1369px;top:214.5px;width:98.5px;height:213.5px;border-radius:10px;background:#fff"></div>
<div class="a" style="left:1390.5px;top:214.5px;width:55.5px;height:7.5px;border-radius:0 0 5px 5px;background:#000"></div>
<div class="a" style="left:1405.3px;top:245.2px;width:26.5px;height:23.8px;background:#b8cde5;"></div>
<div class="a" style="left:1375px;top:293px;width:87px;height:1px;background:#ededed;"></div>
<div class="a" style="left:424.3px;top:1123px;width:327.5px;height:28px;border:1px solid #dadada;border-radius:8px;background:#f1f1f1"></div>
<svg class="a" style="left:430px;top:1128px" width="18" height="18" viewBox="0 0 18 18" fill="none"><circle cx="9" cy="9" r="7.8" stroke="#3a3a3a" stroke-width="1.5"/><path d="M5 6.6 H13 M6.4 9.2 H11.6 M7.8 11.8 H10.2" stroke="#3a3a3a" stroke-width="1.4"/></svg>
<div class="t" style="left:452.90px;top:1130.00px;font-size:15.5px;color:#b3b3b3;font-weight:400;">Filter</div>
<svg class="a" style="left:771px;top:1126px" width="18" height="18" viewBox="0 0 18 18" fill="none"><rect x="1" y="1.5" width="16" height="15" rx="2.5" stroke="#6b6b6b" stroke-width="1.4"/><rect x="3.6" y="4.2" width="2.6" height="9.6" rx=".6" fill="#6b6b6b"/></svg>
<svg class="a" style="left:801px;top:1126px" width="18" height="18" viewBox="0 0 18 18" fill="none"><circle cx="9" cy="9" r="8" stroke="#6b6b6b" stroke-width="1.4"/><circle cx="9" cy="4.8" r="1.2" fill="#6b6b6b"/><path d="M4.8 7 L9 8 L13.2 7 M9 8 V10.8 L6.8 14.2 M9 10.8 L11.2 14.2" stroke="#6b6b6b" stroke-width="1.3" fill="none" stroke-linecap="round"/></svg>
<svg class="a" style="left:834px;top:1126px" width="18" height="18" viewBox="0 0 18 18" fill="none"><circle cx="9" cy="9" r="8" stroke="#6b6b6b" stroke-width="1.4"/><path d="M9 1 A8 8 0 0 0 9 17 Z" fill="#6b6b6b"/><path d="M9 5 A4 4 0 0 1 9 13 Z" fill="#6b6b6b"/></svg>
<svg class="a" style="left:867px;top:1123px" width="19" height="22" viewBox="0 0 19 22" fill="none"><rect x="1" y="8" width="11" height="12.5" rx="1.5" stroke="#6b6b6b" stroke-width="1.4"/><path d="M10 3.5 Q16 3.5 16 9.5 M12.2 1.2 L10 3.5 L12.2 5.8" stroke="#6b6b6b" stroke-width="1.3" fill="none" stroke-linecap="round"/></svg>
<svg class="a" style="left:902px;top:1126px" width="16" height="18" viewBox="0 0 16 18" fill="none"><rect x="1" y="1" width="14" height="16" rx="2" stroke="#c2c2c2" stroke-width="1.3"/><path d="M8 1 V17" stroke="#c2c2c2" stroke-width="1.3"/></svg>
<svg class="a" style="left:936.5px;top:1125px" width="13" height="20" viewBox="0 0 13 20" fill="none"><rect x="1" y="1" width="11" height="18" rx="2.2" stroke="#6b6b6b" stroke-width="1.4"/><path d="M4.5 16 H8.5" stroke="#6b6b6b" stroke-width="1.2"/></svg>
<div class="t" style="left:968.20px;top:1130.00px;font-size:13.95px;color:#6e6e6e;font-weight:400;">iPhone 11</div>
<svg class="a" style="left:1086px;top:1126px" width="19" height="19" viewBox="0 0 19 19" fill="none"><circle cx="7.8" cy="7.8" r="6.6" stroke="#6b6b6b" stroke-width="1.5"/><path d="M12.6 12.6 L17.6 17.6" stroke="#6b6b6b" stroke-width="1.8" stroke-linecap="round"/><path d="M4.8 7.8 H10.8" stroke="#6b6b6b" stroke-width="1.5"/></svg>
<div class="t" style="left:1124.70px;top:1129.00px;font-size:14.14px;color:#6e6e6e;font-weight:400;">76%</div>
<svg class="a" style="left:1171.5px;top:1126px" width="19" height="19" viewBox="0 0 19 19" fill="none"><circle cx="7.8" cy="7.8" r="6.6" stroke="#6b6b6b" stroke-width="1.5"/><path d="M12.6 12.6 L17.6 17.6" stroke="#6b6b6b" stroke-width="1.8" stroke-linecap="round"/><path d="M4.8 7.8 H10.8 M7.8 4.8 V10.8" stroke="#6b6b6b" stroke-width="1.5"/></svg>
<svg class="a" style="left:1349px;top:1126px" width="20" height="19" viewBox="0 0 20 19" fill="none"><path d="M1 5.5 V1 H5.5 M14.5 1 H19 V5.5 M19 13.5 V18 H14.5 M5.5 18 H1 V13.5" stroke="#6b6b6b" stroke-width="1.5" fill="none"/><path d="M13.5 8 A4 4 0 1 0 12.5 12.5 M13.5 5.5 V8.3 H10.7" stroke="#6b6b6b" stroke-width="1.4" fill="none"/></svg>
<svg class="a" style="left:1382px;top:1126px" width="20" height="19" viewBox="0 0 20 19" fill="none"><path d="M1.5 0.5 V18.5" stroke="#6b6b6b" stroke-width="1.6"/><rect x="4.5" y="2.5" width="10" height="5.5" rx="1" stroke="#6b6b6b" stroke-width="1.4"/><rect x="4.5" y="10.5" width="14.5" height="5.5" rx="1" stroke="#6b6b6b" stroke-width="1.4"/></svg>
<svg class="a" style="left:1415px;top:1126px" width="20" height="19" viewBox="0 0 20 19" fill="none"><rect x="6" y="5.5" width="8" height="8" stroke="#6b6b6b" stroke-width="1.4"/><path d="M10 0.5 V5.5 M10 13.5 V18.5 M7.8 0.8 H12.2 M7.8 18.2 H12.2 M1 9.5 H6 M14 9.5 H19 M1 7.5 V11.5 M19 7.5 V11.5" stroke="#6b6b6b" stroke-width="1.3"/></svg>
<svg class="a" style="left:1448px;top:1126px" width="20" height="19" viewBox="0 0 20 19" fill="none"><path d="M10 4.5 L15 13.5 H5 Z" stroke="#6b6b6b" stroke-width="1.4" fill="none" stroke-linejoin="round"/><circle cx="10" cy="10.5" r="1.3" fill="#6b6b6b"/><path d="M1 9.5 H4.5 M15.5 9.5 H19 M1 7.5 V11.5 M19 7.5 V11.5" stroke="#6b6b6b" stroke-width="1.3"/></svg>
<svg class="a" style="left:1483.5px;top:1125px" width="20" height="20" viewBox="0 0 20 20" fill="none"><path d="M6 3 H1 V19 H19 V3 H14" stroke="#6b6b6b" stroke-width="1.5" fill="none"/><path d="M10 0.5 V11.5 M6.3 8 L10 11.7 L13.7 8" stroke="#6b6b6b" stroke-width="1.5" fill="none"/></svg>
<svg class="a" style="left:431.5px;top:1167px" width="21" height="12" viewBox="0 0 21 12" fill="none"><path d="M2 0.5 H15.5 L20 6 L15.5 11.5 H2 Q0.5 11.5 0.5 10 V2 Q0.5 0.5 2 0.5 Z" fill="#1b7ff6"/></svg>
<div class="a" style="left:461px;top:1166px;width:1px;height:15px;background:#dcdcdc;"></div>
<svg class="a" style="left:474px;top:1165px" width="14" height="17" viewBox="0 0 14 17" fill="none"><rect x="1.2" y="1" width="3.6" height="15" rx="1.2" stroke="#6b6b6b" stroke-width="1.4"/><rect x="9.2" y="1" width="3.6" height="15" rx="1.2" stroke="#6b6b6b" stroke-width="1.4"/></svg>
<svg class="a" style="left:510.5px;top:1163.5px" width="19" height="18" viewBox="0 0 19 18" fill="none"><path d="M1.5 10 L8 3.5 L14.5 10" stroke="#b9b9b9" stroke-width="1.3" fill="none"/><path d="M11.5 5.5 Q15.5 6 17.5 9.5 M17.5 6.3 V9.7 H14.3" stroke="#b9b9b9" stroke-width="1.2" fill="none"/><rect x="4" y="13" width="8" height="3.5" rx=".5" stroke="#b9b9b9" stroke-width="1.2"/></svg>
<svg class="a" style="left:550.5px;top:1163.5px" width="14" height="18" viewBox="0 0 14 18" fill="none"><path d="M7 1 V10.5 M3.2 7 L7 10.8 L10.8 7" stroke="#b9b9b9" stroke-width="1.4" fill="none"/><rect x="2.5" y="13" width="9" height="3.5" rx=".5" stroke="#b9b9b9" stroke-width="1.2"/></svg>
<svg class="a" style="left:588.5px;top:1163.5px" width="14" height="18" viewBox="0 0 14 18" fill="none"><path d="M7 11 V1.5 M3.2 5 L7 1.2 L10.8 5" stroke="#b9b9b9" stroke-width="1.4" fill="none"/><rect x="2.5" y="13" width="9" height="3.5" rx=".5" stroke="#b9b9b9" stroke-width="1.2"/></svg>
<div class="a" style="left:615px;top:1166px;width:1px;height:15px;background:#dcdcdc;"></div>
<svg class="a" style="left:626.5px;top:1164px" width="17" height="18" viewBox="0 0 17 18" fill="none"><path d="M4 4 L11 1.5 L16 4 V13.5 L9.5 16.5 L4 14 Z" stroke="#6b6b6b" stroke-width="1.3" fill="none"/><path d="M1.5 6 L8.5 3.5 M1.5 6 V15.5 L7 18" stroke="#6b6b6b" stroke-width="1.3" fill="none"/><path d="M4 4 L9.5 6.5 L16 4 M9.5 6.5 V16.5" stroke="#6b6b6b" stroke-width="1.1"/></svg>
<svg class="a" style="left:664px;top:1164px" width="18" height="18" viewBox="0 0 18 18" fill="none"><circle cx="3.5" cy="3.5" r="2.5" stroke="#6b6b6b" stroke-width="1.4"/><circle cx="3.5" cy="14.5" r="2.5" stroke="#6b6b6b" stroke-width="1.4"/><circle cx="14.5" cy="9" r="2.5" stroke="#6b6b6b" stroke-width="1.4"/><path d="M5.7 4.8 L12.2 8 M5.7 13.2 L12.2 10" stroke="#6b6b6b" stroke-width="1.3"/></svg>
<svg class="a" style="left:703px;top:1164px" width="16" height="18" viewBox="0 0 16 18" fill="none"><rect x="1" y="1" width="14" height="7" rx="3.5" stroke="#6b6b6b" stroke-width="1.4"/><circle cx="5" cy="4.5" r="2" fill="#6b6b6b"/><rect x="1" y="10" width="14" height="7" rx="3.5" stroke="#6b6b6b" stroke-width="1.4"/><circle cx="11" cy="13.5" r="2" fill="#6b6b6b"/></svg>
<svg class="a" style="left:740.5px;top:1163.5px" width="18" height="18" viewBox="0 0 18 18" fill="none"><path d="M17 1 L1.5 7.8 L9 9 L10.2 16.5 Z" stroke="#6b6b6b" stroke-width="1.4" fill="none" stroke-linejoin="round"/></svg>
<div class="a" style="left:768.5px;top:1166px;width:1px;height:15px;background:#dcdcdc;"></div>
<svg class="a" style="left:778px;top:1162.2px" width="21" height="21" viewBox="0 0 21 21" fill="none"><rect x="0.8" y="0.8" width="19.4" height="19.4" rx="4.5" stroke="#c6c6c6" stroke-width="1" fill="#f4f4f4"/><path d="M0.8 7 H20 M0.8 14 H20 M7 0.8 V20 M14 0.8 V20 M1 1 L20 20 M20 1 L1 20" stroke="#cfcfcf" stroke-width=".6"/><circle cx="10.5" cy="10.5" r="5" stroke="#cfcfcf" stroke-width=".6"/></svg>
<div class="t" style="left:804.20px;top:1165.00px;font-size:14.34px;color:#333333;font-weight:400;">GuardDemo</div>
<svg class="a" style="left:1483px;top:1163.5px" width="18" height="18" viewBox="0 0 18 18" fill="none"><rect x="1" y="1" width="16" height="16" rx="3" stroke="#6b6b6b" stroke-width="1.4"/><rect x="3.5" y="11" width="11" height="3.5" rx="1" fill="#6b6b6b"/></svg>
<svg class="a" style="left:1563px;top:106px" width="15" height="18" viewBox="0 0 15 18" fill="none"><path d="M1 1 H9 L14 6 V17 H1 Z" stroke="#6b6b6b" stroke-width="1.4" fill="none" stroke-linejoin="round"/><path d="M9 1 V6 H14" stroke="#6b6b6b" stroke-width="1.3" fill="none"/></svg>
<svg class="a" style="left:1598px;top:106px" width="18" height="18" viewBox="0 0 18 18" fill="none"><circle cx="9" cy="9" r="8" stroke="#6b6b6b" stroke-width="1.4"/><path d="M9 4 V9.5 H5" stroke="#6b6b6b" stroke-width="1.4" fill="none" stroke-linecap="round"/></svg>
<svg class="a" style="left:1636.5px;top:106px" width="18" height="18" viewBox="0 0 18 18" fill="none"><circle cx="9" cy="9" r="8" stroke="#6b6b6b" stroke-width="1.4"/><path d="M6.5 6.8 Q6.5 4.2 9 4.2 Q11.6 4.2 11.6 6.6 Q11.6 8.2 9.8 9 Q9 9.5 9 11" stroke="#6b6b6b" stroke-width="1.4" fill="none" stroke-linecap="round"/><circle cx="9" cy="13.6" r="1" fill="#6b6b6b"/></svg>
<svg class="a" style="left:1675px;top:107px" width="17.5" height="16.5" viewBox="0 0 17.5 16.5" fill="none"><rect x="0" y="0" width="17.5" height="16.5" rx="2" fill="#1b7ff6"/><rect x="2.3" y="3" width="6.5" height="6.5" fill="#fff"/><path d="M10.5 4 H15.5 M10.5 7 H15.5 M2.3 12.5 H15.5" stroke="#fff" stroke-width="1.3"/></svg>
<svg class="a" style="left:1713px;top:106px" width="18" height="18" viewBox="0 0 18 18" fill="none"><path d="M1 3.5 H17 M1 9 H17 M1 14.5 H17" stroke="#6b6b6b" stroke-width="1.4"/><circle cx="12" cy="3.5" r="2" fill="#f4efef" stroke="#6b6b6b" stroke-width="1.3"/><circle cx="6" cy="9" r="2" fill="#f4efef" stroke="#6b6b6b" stroke-width="1.3"/><circle cx="12" cy="14.5" r="2" fill="#f4efef" stroke="#6b6b6b" stroke-width="1.3"/></svg>
<svg class="a" style="left:1751px;top:106px" width="17" height="18" viewBox="0 0 17 18" fill="none"><path d="M1.5 1.5 V16.5 H15.5 Z" stroke="#6b6b6b" stroke-width="1.4" fill="none" stroke-linejoin="round"/><path d="M5 9.5 V13 H8.5 Z" stroke="#6b6b6b" stroke-width="1.2" fill="none"/></svg>
<svg class="a" style="left:1789px;top:106px" width="18" height="18" viewBox="0 0 18 18" fill="none"><path d="M14 4 A7 7 0 1 0 14 14" stroke="#6b6b6b" stroke-width="1.5" fill="none"/><circle cx="9" cy="9" r="3" fill="#6b6b6b"/><path d="M12 9 H17.5" stroke="#6b6b6b" stroke-width="1.5"/></svg>
<div class="t" style="left:1528.00px;top:141.00px;font-size:15.6px;color:#706c6c;font-weight:700;">Custom Class</div>
<div class="a" style="left:1572.5px;top:165.8px;width:272px;height:60.5px;border:2.4px solid #ee2a1a"></div>
<div class="t" style="right:300.70px;top:177.00px;font-size:13.5px;color:#2a2a2a;font-weight:400;text-align:right;">Class</div>
<div class="a" style="left:1626.3px;top:171.3px;width:213px;height:20px;background:#fff;box-shadow:0 0.5px 1.5px rgba(0,0,0,.22);border-radius:4px"></div>
<div class="t" style="left:1630.50px;top:175.00px;font-size:14.63px;color:#1e1e1e;font-weight:400;">PasswordTextField</div>
<svg class="a" style="left:1801.5px;top:174.5px" width="13" height="13" viewBox="0 0 13 13" fill="none"><circle cx="6.5" cy="6.5" r="6.3" fill="#8e8e8e"/><path d="M3 6.5 H9.3 M6.8 3.9 L9.5 6.5 L6.8 9.1" stroke="#fff" stroke-width="1.5" fill="none" stroke-linecap="round" stroke-linejoin="round"/></svg>
<svg class="a" style="left:1822px;top:173.7px" width="15.5" height="15.5" viewBox="0 0 15.5 15.5" fill="none"><rect x="0" y="0" width="15.5" height="15.5" rx="3.5" fill="#1b7ff6"/><path d="M4.6 6.3 L7.75 9.3 L10.9 6.3" stroke="#fff" stroke-width="1.6" fill="none" stroke-linecap="round" stroke-linejoin="round"/></svg>
<div class="t" style="right:300.70px;top:205.00px;font-size:13.5px;color:#2a2a2a;font-weight:400;text-align:right;">Module</div>
<div class="a" style="left:1622.8px;top:195px;width:219.4px;height:27.7px;border-radius:7px;background:#88adf0"></div>
<div class="a" style="left:1626.9px;top:199.2px;width:211.2px;height:19.6px;border-radius:3.5px;background:#fff;box-shadow:0 0 0 .8px #6f97e6"></div>
<div class="t" style="left:1630.50px;top:203.00px;font-size:14.63px;color:#1e1e1e;font-weight:400;">Guard</div>
<svg class="a" style="left:1822px;top:201.3px" width="15.5" height="16" viewBox="0 0 15.5 16" fill="none"><rect x="0" y="0" width="15.5" height="16" rx="3.5" fill="#1b7ff6"/><path d="M4.6 6.5 L7.75 9.5 L10.9 6.5" stroke="#fff" stroke-width="1.6" fill="none" stroke-linecap="round" stroke-linejoin="round"/></svg>
<div class="a" style="left:1625.5px;top:228.5px;width:15.5px;height:15.5px;border-radius:3.5px;background:#fff;box-shadow:0 0 0 .6px rgba(0,0,0,.16),0 .6px 1px rgba(0,0,0,.12)"></div>
<div class="t" style="left:1645.50px;top:229.00px;font-size:15.0px;color:#2a2a2a;font-weight:400;">Inherit Module From Target</div>
<div class="a" style="left:1528.5px;top:263px;width:310px;height:1px;background:#dcd7d7;"></div>
<div class="t" style="left:1528.00px;top:273.00px;font-size:15.6px;color:#706c6c;font-weight:700;">Identity</div>
<div class="t" style="right:300.70px;top:309.00px;font-size:13.4px;color:#2a2a2a;font-weight:400;text-align:right;">Restoration ID</div>
<div class="a" style="left:1626.5px;top:304.7px;width:212px;height:20.7px;background:#fff;box-shadow:0 0.5px 1.5px rgba(0,0,0,.22);"></div>
<div class="a" style="left:1528.5px;top:342px;width:310px;height:1px;background:#dcd7d7;"></div>
<div class="t" style="left:1528.00px;top:352.00px;font-size:16.0px;color:#706c6c;font-weight:700;">User Defined Runtime Attributes</div>
<div class="a" style="left:1529.2px;top:376.6px;width:309px;height:122.2px;border:1px solid #c2c2c2;background:#fff"></div>
<div class="a" style="left:1530.2px;top:412px;width:307px;height:1px;background:#e5e5e5;"></div>
<div class="t" style="left:1540.50px;top:388.00px;font-size:14.4px;color:#2a2a2a;font-weight:400;">Key Path</div>
<div class="a" style="left:1697px;top:385px;width:1px;height:19px;background:#e3e3e3;"></div>
<div class="t" style="left:1702.80px;top:388.00px;font-size:14.4px;color:#2a2a2a;font-weight:400;">Type</div>
<div class="a" style="left:1783.5px;top:385px;width:1px;height:19px;background:#e3e3e3;"></div>
<div class="t" style="left:1788.90px;top:388.00px;font-size:14.4px;color:#2a2a2a;font-weight:400;">Val...</div>
<svg class="a" style="left:1536px;top:480.5px" width="14" height="14" viewBox="0 0 14 14" fill="none"><path d="M7 1 V13 M1 7 H13" stroke="#555" stroke-width="1.5"/></svg>
<div class="a" style="left:1561.8px;top:486.5px;width:13px;height:1.4px;background:#c8c8c8;"></div>
<div class="a" style="left:1528.5px;top:510px;width:310px;height:1px;background:#dcd7d7;"></div>
<div class="t" style="left:1528.00px;top:519.00px;font-size:15.6px;color:#706c6c;font-weight:700;">Document</div>
<div class="t" style="right:300.70px;top:556.00px;font-size:13.5px;color:#2a2a2a;font-weight:400;text-align:right;">Label</div>
<div class="a" style="left:1626.5px;top:551.4px;width:212px;height:20.7px;background:#fff;box-shadow:0 0.5px 1.5px rgba(0,0,0,.22);"></div>
<div class="t" style="left:1630.90px;top:554.00px;font-size:14.6px;color:#bfbfbf;font-weight:400;">Xcode Specific Label</div>
<svg class="a" style="left:1629px;top:583px" width="11" height="11" viewBox="0 0 11 11" fill="none"><path d="M1 1 L10 10 M10 1 L1 10" stroke="#3a3a3a" stroke-width="1.5"/></svg>
<div class="a" style="left:1648.9px;top:583px;width:11px;height:11px;border-radius:2px;background:#ef8b80"></div>
<div class="a" style="left:1671.8px;top:583px;width:11px;height:11px;border-radius:2px;background:#f3b870"></div>
<div class="a" style="left:1694.6px;top:583px;width:11px;height:11px;border-radius:2px;background:#f6da7e"></div>
<div class="a" style="left:1717.5px;top:583px;width:11px;height:11px;border-radius:2px;background:#bcd87c"></div>
<div class="a" style="left:1740.3px;top:583px;width:11px;height:11px;border-radius:2px;background:#86b2f2"></div>
<div class="a" style="left:1763.2px;top:583px;width:11px;height:11px;border-radius:2px;background:#cfaaea"></div>
<div class="a" style="left:1786.0px;top:583px;width:11px;height:11px;border-radius:2px;background:#cccccc"></div>
<div class="t" style="right:300.70px;top:609.00px;font-size:13.5px;color:#2a2a2a;font-weight:400;text-align:right;">Object ID</div>
<div class="t" style="left:1628.30px;top:608.00px;font-size:14.6px;color:#2a2a2a;font-weight:400;">gPT-rk-Ma2</div>
<div class="t" style="right:300.70px;top:634.00px;font-size:13.5px;color:#2a2a2a;font-weight:400;text-align:right;">Lock</div>
<div class="a" style="left:1626.5px;top:629.8px;width:213px;height:20.7px;border-radius:4.5px;background:#fff;box-shadow:0 0 0 .6px rgba(0,0,0,.12),0 .8px 1.6px rgba(0,0,0,.2)"></div>
<div class="t" style="left:1634.40px;top:633.00px;font-size:14.6px;color:#1e1e1e;font-weight:400;">Inherited - (Nothing)</div>
<svg class="a" style="left:1822.2px;top:632.4px" width="15" height="15.3" viewBox="0 0 15 15.3" fill="none"><rect x="0" y="0" width="15" height="15.3" rx="3.5" fill="#1b7ff6"/><path d="M4.8 5.8 L7.5 3.2 L10.2 5.8 M4.8 9.5 L7.5 12.1 L10.2 9.5" stroke="#fff" stroke-width="1.4" fill="none" stroke-linecap="round" stroke-linejoin="round"/></svg>
<div class="t" style="right:300.70px;top:663.00px;font-size:13.6px;color:#2a2a2a;font-weight:400;text-align:right;">Localizer Hint</div>
<div class="a" style="left:1626.5px;top:659.2px;width:212px;height:20.8px;background:#fff;box-shadow:0 0.5px 1.5px rgba(0,0,0,.22);"></div>
<div class="t" style="left:1630.90px;top:662.00px;font-size:14.6px;color:#bfbfbf;font-weight:400;">Comment For Localizer</div>
<div class="a" style="left:1528.5px;top:696px;width:310px;height:1px;background:#dcd7d7;"></div>
<div class="t" style="left:1528.00px;top:706.00px;font-size:15.6px;color:#706c6c;font-weight:700;">Accessibility</div>
<div class="t" style="right:300.70px;top:738.00px;font-size:13.77px;color:#2a2a2a;font-weight:400;text-align:right;">Accessibility</div>
<svg class="a" style="left:1626.5px;top:736.3px" width="15.5" height="15.5" viewBox="0 0 15.5 15.5" fill="none"><rect x="0" y="0" width="15.5" height="15.5" rx="3.5" fill="#1b7ff6"/><path d="M3.6 8 L6.5 11 L11.8 4.4" stroke="#fff" stroke-width="1.9" fill="none" stroke-linecap="round" stroke-linejoin="round"/></svg>
<div class="t" style="left:1647.50px;top:737.00px;font-size:14.6px;color:#2a2a2a;font-weight:400;">Enabled</div>
<div class="t" style="right:300.70px;top:765.00px;font-size:13.5px;color:#2a2a2a;font-weight:400;text-align:right;">Label</div>
<div class="a" style="left:1626.5px;top:761px;width:212px;height:19.6px;background:#fff;box-shadow:0 0.5px 1.5px rgba(0,0,0,.22);"></div>
<div class="t" style="left:1630.90px;top:763.00px;font-size:14.6px;color:#bfbfbf;font-weight:400;">Label</div>
<div class="t" style="right:300.70px;top:794.00px;font-size:13.5px;color:#2a2a2a;font-weight:400;text-align:right;">Hint</div>
<div class="a" style="left:1626.5px;top:789.8px;width:212px;height:20.2px;background:#fff;box-shadow:0 0.5px 1.5px rgba(0,0,0,.22);"></div>
<div class="t" style="left:1630.90px;top:792.00px;font-size:14.6px;color:#bfbfbf;font-weight:400;">Hint</div>
<div class="t" style="right:300.70px;top:823.00px;font-size:13.5px;color:#2a2a2a;font-weight:400;text-align:right;">Identifier</div>
<div class="a" style="left:1626.5px;top:818.8px;width:212px;height:20px;background:#fff;box-shadow:0 0.5px 1.5px rgba(0,0,0,.22);"></div>
<div class="t" style="left:1630.90px;top:822.00px;font-size:14.6px;color:#bfbfbf;font-weight:400;">Identifier</div>
<div class="a" style="left:1528.5px;top:845px;width:310px;height:1px;background:#dcd7d7;"></div>
<div class="t" style="right:300.70px;top:855.00px;font-size:13.3px;color:#2a2a2a;font-weight:400;text-align:right;">Traits</div>
<div class="a" style="left:1626.5px;top:853.4px;width:15.5px;height:15.5px;border-radius:3.5px;background:#fff;box-shadow:0 0 0 .6px rgba(0,0,0,.16),0 .6px 1px rgba(0,0,0,.12)"></div>
<div class="t" style="left:1647.50px;top:854.00px;font-size:14.7px;color:#2a2a2a;font-weight:400;">Button</div>
<div class="a" style="left:1626.5px;top:876.1999999999999px;width:15.5px;height:15.5px;border-radius:3.5px;background:#fff;box-shadow:0 0 0 .6px rgba(0,0,0,.16),0 .6px 1px rgba(0,0,0,.12)"></div>
<div class="t" style="left:1647.50px;top:877.00px;font-size:14.7px;color:#2a2a2a;font-weight:400;">Image</div>
<div class="a" style="left:1626.5px;top:899.0px;width:15.5px;height:15.5px;border-radius:3.5px;background:#fff;box-shadow:0 0 0 .6px rgba(0,0,0,.16),0 .6px 1px rgba(0,0,0,.12)"></div>
<div class="t" style="left:1647.50px;top:900.00px;font-size:14.7px;color:#2a2a2a;font-weight:400;">Static Text</div>
<div class="a" style="left:1626.5px;top:921.8px;width:15.5px;height:15.5px;border-radius:3.5px;background:#fff;box-shadow:0 0 0 .6px rgba(0,0,0,.16),0 .6px 1px rgba(0,0,0,.12)"></div>
<div class="t" style="left:1647.50px;top:922.00px;font-size:14.7px;color:#2a2a2a;font-weight:400;">Search Field</div>
<div class="a" style="left:1626.5px;top:944.6px;width:15.5px;height:15.5px;border-radius:3.5px;background:#fff;box-shadow:0 0 0 .6px rgba(0,0,0,.16),0 .6px 1px rgba(0,0,0,.12)"></div>
<div class="t" style="left:1647.50px;top:945.00px;font-size:14.7px;color:#2a2a2a;font-weight:400;">Plays Sound</div>
<div class="a" style="left:1626.5px;top:967.4px;width:15.5px;height:15.5px;border-radius:3.5px;background:#fff;box-shadow:0 0 0 .6px rgba(0,0,0,.16),0 .6px 1px rgba(0,0,0,.12)"></div>
<div class="t" style="left:1647.50px;top:968.00px;font-size:14.7px;color:#2a2a2a;font-weight:400;">Keyboard Key</div>
<div class="a" style="left:1626.5px;top:990.1999999999999px;width:15.5px;height:15.5px;border-radius:3.5px;background:#fff;box-shadow:0 0 0 .6px rgba(0,0,0,.16),0 .6px 1px rgba(0,0,0,.12)"></div>
<div class="t" style="left:1647.50px;top:991.00px;font-size:14.7px;color:#2a2a2a;font-weight:400;">Summary Element</div>
<svg class="a" style="left:1626.5px;top:1012.9999999999999px" width="15.5" height="15.5" viewBox="0 0 15.5 15.5" fill="none"><rect x="0" y="0" width="15.5" height="15.5" rx="3.5" fill="#1b7ff6"/><path d="M3.6 8 L6.5 11 L11.8 4.4" stroke="#fff" stroke-width="1.9" fill="none" stroke-linecap="round" stroke-linejoin="round"/></svg>
<div class="t" style="left:1647.50px;top:1014.00px;font-size:14.7px;color:#2a2a2a;font-weight:400;">User Interaction Enabled</div>
<div class="a" style="left:1626.5px;top:1035.8000000000002px;width:15.5px;height:15.5px;border-radius:3.5px;background:#fff;box-shadow:0 0 0 .6px rgba(0,0,0,.16),0 .6px 1px rgba(0,0,0,.12)"></div>
<div class="t" style="left:1647.50px;top:1036.00px;font-size:14.7px;color:#2a2a2a;font-weight:400;">Updates Frequently</div>
<div class="a" style="left:1626.5px;top:1058.6000000000001px;width:15.5px;height:15.5px;border-radius:3.5px;background:#fff;box-shadow:0 0 0 .6px rgba(0,0,0,.16),0 .6px 1px rgba(0,0,0,.12)"></div>
<div class="t" style="left:1647.50px;top:1059.00px;font-size:14.7px;color:#2a2a2a;font-weight:400;">Starts Media Session</div>
<div class="a" style="left:1626.5px;top:1081.4px;width:15.5px;height:15.5px;border-radius:3.5px;background:#fff;box-shadow:0 0 0 .6px rgba(0,0,0,.16),0 .6px 1px rgba(0,0,0,.12)"></div>
<div class="t" style="left:1647.50px;top:1082.00px;font-size:14.7px;color:#2a2a2a;font-weight:400;">Adjustable</div>
<div class="a" style="left:1626.5px;top:1104.2px;width:15.5px;height:15.5px;border-radius:3.5px;background:#fff;box-shadow:0 0 0 .6px rgba(0,0,0,.16),0 .6px 1px rgba(0,0,0,.12)"></div>
<div class="t" style="left:1647.50px;top:1105.00px;font-size:14.7px;color:#2a2a2a;font-weight:400;">Allows Direct Interaction</div>
<div class="a" style="left:1626.5px;top:1127.0px;width:15.5px;height:15.5px;border-radius:3.5px;background:#fff;box-shadow:0 0 0 .6px rgba(0,0,0,.16),0 .6px 1px rgba(0,0,0,.12)"></div>
<div class="t" style="left:1647.50px;top:1128.00px;font-size:14.7px;color:#2a2a2a;font-weight:400;">Causes Page Turn</div>
<div class="a" style="left:1626.5px;top:1149.8000000000002px;width:15.5px;height:15.5px;border-radius:3.5px;background:#fff;box-shadow:0 0 0 .6px rgba(0,0,0,.16),0 .6px 1px rgba(0,0,0,.12)"></div>
<div class="t" style="left:1647.50px;top:1150.00px;font-size:14.7px;color:#2a2a2a;font-weight:400;">Header</div>
<div class="a" style="left:1738.3px;top:853.4px;width:15.5px;height:15.5px;border-radius:3.5px;background:#fff;box-shadow:0 0 0 .6px rgba(0,0,0,.16),0 .6px 1px rgba(0,0,0,.12)"></div>
<div class="t" style="left:1758.60px;top:854.00px;font-size:14.7px;color:#2a2a2a;font-weight:400;">Link</div>
<div class="a" style="left:1738.3px;top:876.1999999999999px;width:15.5px;height:15.5px;border-radius:3.5px;background:#fff;box-shadow:0 0 0 .6px rgba(0,0,0,.16),0 .6px 1px rgba(0,0,0,.12)"></div>
<div class="t" style="left:1758.60px;top:877.00px;font-size:14.7px;color:#2a2a2a;font-weight:400;">Selected</div>
<div class="a" style="left:1528.5px;top:1182px;width:310px;height:1px;background:#dcd7d7;"></div>
</div>
</body></html>
